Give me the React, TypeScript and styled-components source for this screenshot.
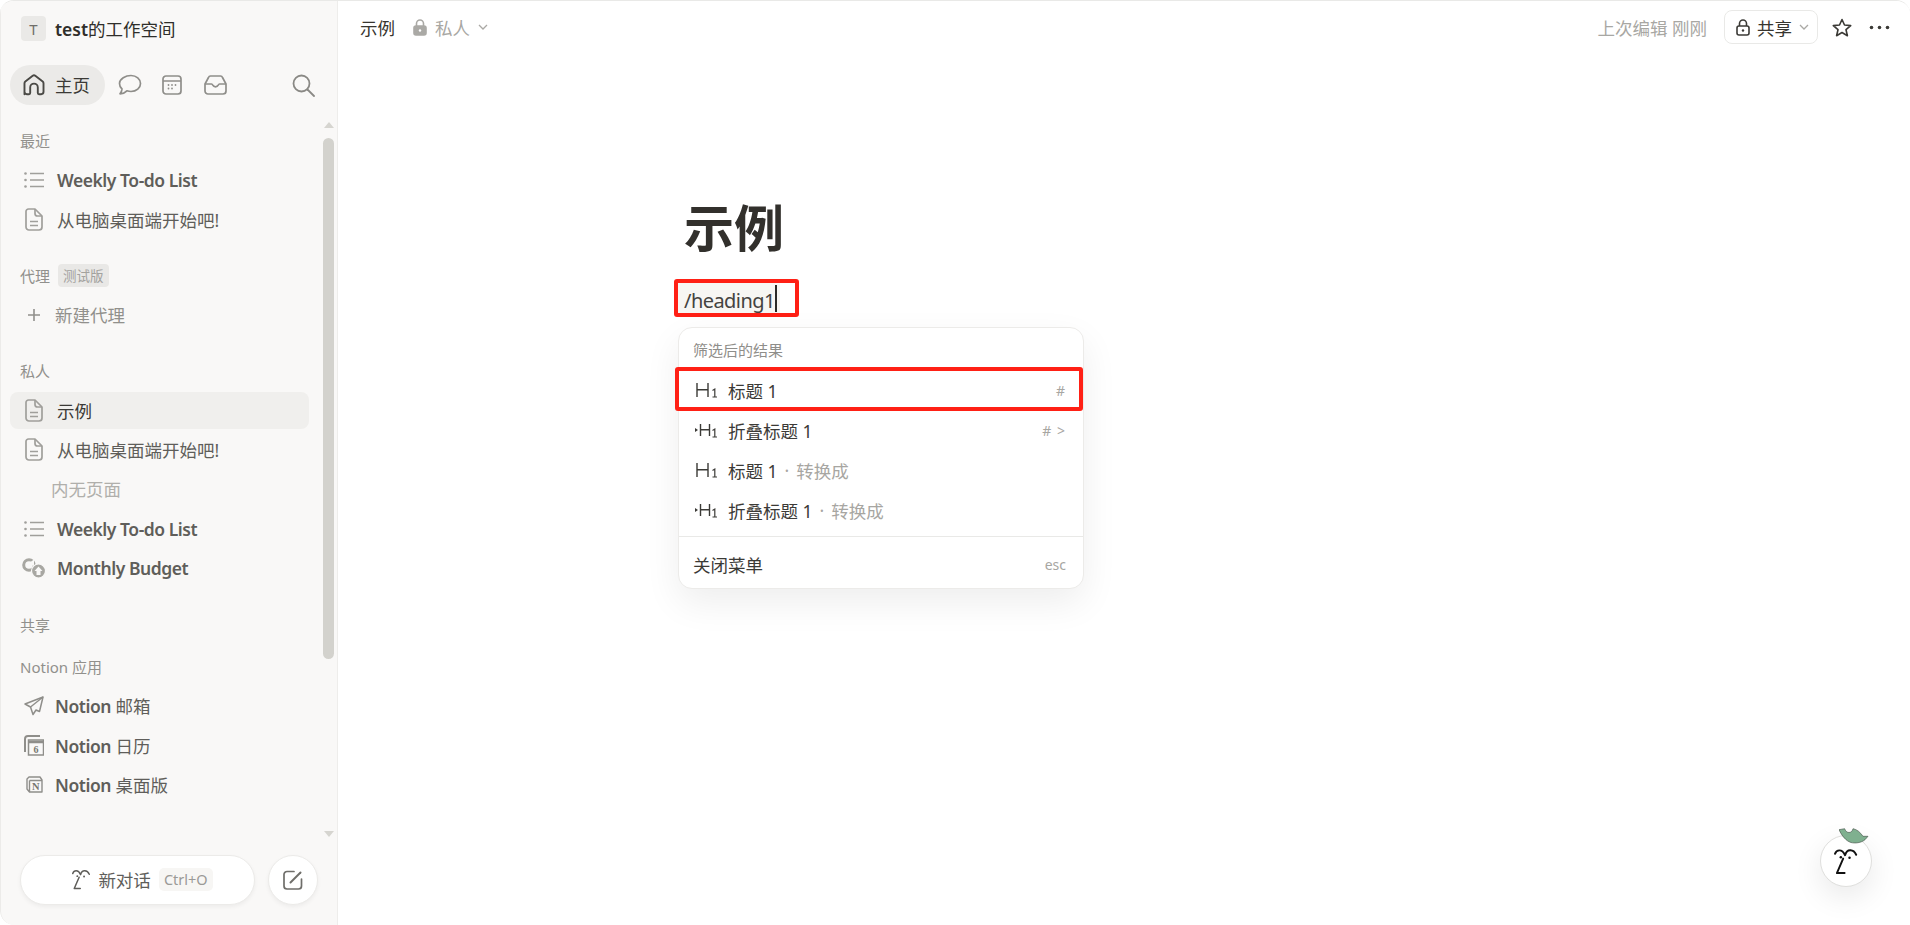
import React from "react";
import styled, { createGlobalStyle } from "styled-components";

const FONT = `"Noto Sans", "Noto Sans CJK SC", sans-serif`;
const RED = "#ff2015";

const GlobalStyle = createGlobalStyle`
  html, body {
    margin: 0;
    height: 100%;
    background: #fff;
    overflow: hidden;
  }
  * { box-sizing: border-box; }
`;

const Window = styled.div`
  display: flex;
  height: 100vh;
  border-top: 1px solid #e9e9e7;
  border-radius: 14px;
  overflow: hidden;
  font-family: ${FONT};
  font-size: 17.5px;
  color: #37352f;
`;

/* sidebar */
const Sidebar = styled.aside`
  flex: 0 0 338px;
  display: flex;
  flex-direction: column;
  background: #f9f8f7;
  border-left: 1px solid #ecebe9;
  border-right: 1px solid #eeedeb;
  border-bottom-left-radius: 14px;
`;

const Workspace = styled.div`
  height: 64px;
  padding: 0 0 9px 20px;
  display: flex;
  align-items: center;
  gap: 9px;
  color: #2f2e2a;
`;

const WorkspaceName = styled.strong`
  font-weight: 600;
`;

const WorkspaceBadge = styled.span`
  width: 25px;
  height: 25px;
  border-radius: 4px;
  background: #eae9e7;
  color: #6f6e6a;
  font-size: 15px;
  display: flex;
  align-items: center;
  justify-content: center;
`;

const NavBar = styled.nav`
  height: 40px;
  padding-left: 9px;
  display: flex;
  align-items: center;
`;

const HomePill = styled.div`
  width: 95px;
  height: 40px;
  margin-right: 13px;
  padding-left: 13px;
  border-radius: 20px;
  background: #ebeae8;
  display: flex;
  align-items: center;
  gap: 10px;
  color: #3b3a36;
`;

const HomeLabel = styled.span`
  padding-bottom: 2px;
`;

const NavIcon = styled.span<{ $gap?: number }>`
  display: flex;
  margin-left: ${(p) => p.$gap ?? 0}px;
`;

const ScrollArea = styled.div`
  flex: 1;
  min-height: 0;
  display: flex;
`;

const ScrollBody = styled.div`
  flex: 1;
  padding: 25px 14px 0 9px;
`;

const ScrollTrack = styled.div`
  flex: 0 0 11px;
  margin-right: 3px;
  padding: 17px 0 3px;
  display: flex;
  flex-direction: column;
  align-items: center;
`;

const ArrowUp = styled.span`
  width: 0;
  height: 0;
  border-left: 5px solid transparent;
  border-right: 5px solid transparent;
  border-bottom: 6px solid #d6d5d0;
  margin-bottom: 10px;
`;

const ArrowDown = styled.span`
  width: 0;
  height: 0;
  margin-top: auto;
  border-left: 5px solid transparent;
  border-right: 5px solid transparent;
  border-top: 6px solid #d6d5d0;
`;

const ScrollThumb = styled.span`
  width: 11px;
  height: 521px;
  border-radius: 6px;
  background: #d3d2cd;
`;

const Group = styled.section<{ $tight?: boolean }>`
  padding-bottom: ${(p) => (p.$tight ? 20 : 25)}px;
`;

const GroupLabel = styled.div<{ $flush?: boolean }>`
  height: 22px;
  padding: 0 0 2px 10px;
  margin-bottom: ${(p) => (p.$flush ? 0 : 9)}px;
  display: flex;
  align-items: center;
  gap: 8px;
  font-size: 15px;
  color: #91908c;
`;

const BetaTag = styled.span`
  height: 23px;
  padding: 0 5px;
  border-radius: 4px;
  background: #e9e8e6;
  font-size: 13.5px;
  color: #a3a29e;
  display: flex;
  align-items: center;
`;

const Row = styled.div<{ $active?: boolean; $muted?: boolean; $tightIcon?: boolean }>`
  height: 37px;
  margin-bottom: 2.5px;
  padding-left: 12px;
  border-radius: 8px;
  display: flex;
  align-items: center;
  gap: ${(p) => (p.$tightIcon ? 9 : 11)}px;
  background: ${(p) => (p.$active ? "#f0efed" : "transparent")};
  color: ${(p) => (p.$active ? "#3b3a36" : p.$muted ? "#91908c" : "#5f5e5a")};
`;

const RowStrong = styled.span`
  font-weight: 600;
  letter-spacing: -0.45px;
`;

const EmptyHint = styled.div`
  height: 37px;
  margin-bottom: 2.5px;
  padding: 0 0 1px 41px;
  display: flex;
  align-items: center;
  color: #b0afab;
`;

const IconSlot = styled.span`
  flex: 0 0 24px;
  display: flex;
  align-items: center;
  justify-content: center;
`;

const SidebarFooter = styled.footer`
  padding: 15px 19px 20px;
  display: flex;
  gap: 13px;
`;

const NewChatButton = styled.button`
  flex: 1;
  height: 50px;
  padding: 0 0 2px 10px;
  border: 1px solid #ecebe9;
  border-radius: 25px;
  background: #fff;
  box-shadow: 0 2px 4px rgba(0, 0, 0, 0.05);
  display: flex;
  align-items: center;
  justify-content: center;
  gap: 8px;
  font-family: inherit;
  font-size: 17.5px;
  color: #5f5e5a;
`;

const ShortcutChip = styled.span`
  height: 23px;
  padding: 0 5px;
  border-radius: 5px;
  background: #f7f6f4;
  font-size: 14.5px;
  color: #9b9a97;
  display: flex;
  align-items: center;
`;

const ComposeButton = styled.button`
  flex: 0 0 50px;
  height: 50px;
  padding: 0;
  border: 1px solid #ecebe9;
  border-radius: 50%;
  background: #fff;
  box-shadow: 0 2px 4px rgba(0, 0, 0, 0.05);
  display: flex;
  align-items: center;
  justify-content: center;
`;

/* main */
const Main = styled.main`
  flex: 1;
  min-width: 0;
  position: relative;
  display: flex;
  flex-direction: column;
  background: #fff;
`;

const TopBar = styled.header`
  height: 52px;
  padding: 0 20px 0 22px;
  display: flex;
  align-items: center;
`;

const Crumb = styled.span`
  color: #37352f;
  margin-right: 18px;
`;

const Privacy = styled.span`
  display: flex;
  align-items: center;
  gap: 8px;
  color: #a8a7a3;
`;

const TopActions = styled.div`
  margin-left: auto;
  display: flex;
  align-items: center;
`;

const EditedAt = styled.span`
  color: #a8a7a3;
  margin-right: 17px;
`;

const ShareButton = styled.div`
  width: 94px;
  height: 34px;
  margin-right: 14px;
  padding-left: 11px;
  border: 1px solid #e9e9e7;
  border-radius: 8px;
  display: flex;
  align-items: center;
  gap: 7px;
  color: #37352f;
`;

const DotsButton = styled.span`
  display: flex;
  margin-left: 17px;
`;

const Document = styled.div`
  padding: 145px 0 0 346px;
`;

const Title = styled.h1`
  margin: 0 0 25px;
  height: 60px;
  font-size: 50px;
  line-height: 60px;
  font-weight: 700;
  color: #32302c;
`;

const CommandLine = styled.div`
  position: relative;
  height: 30px;
  width: 102px;
  padding: 4px 0 0 6px;
  margin-left: -6px;
  background: #f7f6f3;
  display: flex;
  align-items: center;
  font-size: 20px;
  letter-spacing: -0.55px;
  color: #44433f;
`;

const Caret = styled.span`
  width: 2px;
  height: 27px;
  margin-top: -4px;
  background: #2b2a27;
`;

const RedFrame = styled.span<{ $inset: string }>`
  position: absolute;
  inset: ${(p) => p.$inset};
  border: 4px solid ${RED};
  border-radius: 3px;
  pointer-events: none;
`;

const SlashMenu = styled.div`
  position: absolute;
  top: 44px;
  left: 0;
  width: 406px;
  height: 262px;
  padding-top: 6px;
  background: #fff;
  border: 1px solid #ecebe9;
  border-radius: 14px;
  box-shadow: 0 14px 36px rgba(0, 0, 0, 0.07);
  letter-spacing: normal;
`;

const MenuLabel = styled.div`
  height: 36px;
  padding: 0 0 6px 14px;
  display: flex;
  align-items: center;
  font-size: 15px;
  color: #8f8e8a;
`;

const MenuRow = styled.div`
  position: relative;
  height: 40px;
  padding: 0 17px 0 16px;
  display: flex;
  align-items: center;
  font-size: 17.5px;
  color: #3b3a36;
`;

const MenuRowIcon = styled.span`
  flex: 0 0 23px;
  margin-right: 10px;
  display: flex;
`;

const Dot = styled.span`
  margin: 0 7px;
  color: #a7a6a2;
`;

const Hint = styled.span`
  color: #a7a6a2;
`;

const MenuShortcut = styled.span`
  margin-left: auto;
  font-size: 14px;
  letter-spacing: 1px;
  color: #a7a6a2;
`;

const MenuDivider = styled.div`
  height: 1px;
  margin-top: 6px;
  background: #e9e9e7;
`;

const MenuFooter = styled.div`
  height: 51px;
  padding: 3px 17px 0 14px;
  display: flex;
  align-items: center;
  justify-content: space-between;
  font-size: 17.5px;
  color: #3b3a36;
`;

const EscHint = styled.span`
  font-size: 14px;
  color: #a7a6a2;
`;

const AssistantBubble = styled.div`
  position: absolute;
  right: 38px;
  bottom: 38px;
  width: 52px;
  height: 52px;
  border: 1px solid #dfdfdd;
  border-radius: 50%;
  background: #fff;
  box-shadow: 0 10px 30px rgba(0, 0, 0, 0.09);
  display: flex;
  align-items: center;
  justify-content: center;
`;

const LeafHat = styled.svg`
  position: absolute;
  top: -8px;
  left: 18px;
`;

/* icons */
const GREY = "#a09f9b";

const HomeIcon = () => (
  <svg width="22" height="22" viewBox="2 1.500 18 18.500" fill="none" stroke="#4a4945" strokeWidth="1.600">
    <path d="M3 18.500 V9.300 a1.800 1.800 0 0 1 .7-1.400 L9.900 3 a1.800 1.800 0 0 1 2.200 0 L18.300 7.900 a1.800 1.800 0 0 1 .7 1.400 V16.500 a2 2 0 0 1-2 2 H15.200 a1 1 0 0 1-1-1 V12.800 a3.200 3.200 0 0 0-6.400 0 V17.500 a1 1 0 0 1-1 1 H5 a2 2 0 0 1-2-2 Z" strokeLinejoin="round" />
  </svg>
);

const ChatIcon = () => (
  <svg width="24" height="22" viewBox="0 0 24 22" fill="none" stroke="#8f8e8a" strokeWidth="1.700" strokeLinejoin="round">
    <path d="M13 1.500 c5.400 0 9.500 3.500 9.500 8 s-4.100 8-9.500 8 c-1.500 0-2.900-.3-4.100-.7 -1.500 1.600-3.700 2.800-6.900 3 1.100-1.300 1.900-3 2-4.800 C2.300 13.500 1.500 11.600 1.500 9.500 1.500 5 7.600 1.500 13 1.500 Z" />
  </svg>
);

const CalendarIcon = () => (
  <svg width="20" height="20" viewBox="0 0 20 20" fill="none" stroke="#8f8e8a" strokeWidth="1.700">
    <rect x="1" y="1" width="18" height="18" rx="3" />
    <path d="M1 6 H19" />
    <g fill="#8f8e8a" stroke="none">
      <circle cx="6.500" cy="10" r=".9" />
      <circle cx="10" cy="10" r=".9" />
      <circle cx="13.500" cy="10" r=".9" />
      <circle cx="6.500" cy="13.500" r=".9" />
      <circle cx="10" cy="13.500" r=".9" />
    </g>
  </svg>
);

const InboxIcon = () => (
  <svg width="23" height="20" viewBox="0 0 23 20" fill="none" stroke="#8f8e8a" strokeWidth="1.700" strokeLinejoin="round">
    <path d="M1 9 L4.500 2.500 a2.500 2.500 0 0 1 2-1.500 H16.500 a2.500 2.500 0 0 1 2 1.500 L22 9 V16 a3 3 0 0 1-3 3 H4 a3 3 0 0 1-3-3 Z" />
    <path d="M1 9 H7.500 c.8 0 1 .5 1.300 1.200 .5 1 1.400 1.600 2.700 1.600 s2.200-.6 2.700-1.600 C14.500 9.500 14.700 9 15.500 9 H22" />
  </svg>
);

const SearchIcon = () => (
  <svg width="23" height="23" viewBox="0 0 23 23" fill="none" stroke="#8a8985" strokeWidth="1.800" strokeLinecap="round">
    <circle cx="9.500" cy="9.500" r="8" />
    <path d="M15.500 15.500 L22 22" />
  </svg>
);

const ListIcon = () => (
  <svg width="20" height="16" viewBox="0 0 20 16" fill="none" stroke={GREY} strokeWidth="1.700">
    <path d="M6 1.500 H20 M6 8 H20 M6 14.500 H20" />
    <g fill={GREY} stroke="none">
      <circle cx="1.500" cy="1.500" r="1.300" />
      <circle cx="1.500" cy="8" r="1.300" />
      <circle cx="1.500" cy="14.500" r="1.300" />
    </g>
  </svg>
);

const PageIcon = () => (
  <svg width="18" height="23" viewBox="0 0 18 23" fill="none" stroke={GREY} strokeWidth="1.700" strokeLinejoin="round">
    <path d="M3.500 1 H10 L17 8 V19 a3 3 0 0 1-3 3 H4 a3 3 0 0 1-3-3 V3.500 A2.500 2.500 0 0 1 3.500 1 Z" />
    <path d="M10 1 V5.500 a2.500 2.500 0 0 0 2.500 2.500 H17" />
    <path d="M5 13.500 H13 M5 17.500 H13" />
  </svg>
);

const PlusIcon = () => (
  <svg width="14" height="14" viewBox="0 0 14 14" stroke="#91908c" strokeWidth="1.600">
    <path d="M7 1 V13 M1 7 H13" />
  </svg>
);

const CoinsIcon = () => (
  <svg width="24" height="20" viewBox="0 0 24 20">
    <circle cx="7" cy="7" r="5.300" fill="none" stroke="#a8a7a2" strokeWidth="3" />
    <path d="M7 5 L12 1.500 V8 Z" fill="#f9f8f7" />
    <circle cx="16.500" cy="13" r="7" fill="#a8a7a2" stroke="#f9f8f7" strokeWidth="1.200" />
    <path d="M16.500 8.500 L20.500 13 H18.500 V17 H14.500 V13 H12.500 Z" fill="#f9f8f7" />
  </svg>
);

const SendIcon = () => (
  <svg width="20" height="20" viewBox="0 0 20 20" fill="none" stroke="#8f8e8a" strokeWidth="1.500" strokeLinejoin="round">
    <path d="M19 1 L1 8 L6.500 11 L9 18.500 L12 14 L15.500 15.500 Z" />
    <path d="M19 1 L6.500 11" />
  </svg>
);

const CalendarAppIcon = () => (
  <svg width="20" height="21" viewBox="0 0 20 21" fill="none" stroke="#8f8e8a">
    <path d="M1 17 V4 a3 3 0 0 1 3-3 H16" strokeWidth="2" />
    <rect x="4.500" y="5" width="15" height="15" fill="#f9f8f7" strokeWidth="1.500" />
    <path d="M4.500 7 H19.500" strokeWidth="2.500" />
    <text x="12" y="18" textAnchor="middle" fontSize="10" fontWeight="700" fontFamily="Liberation Serif, serif" fill="#77766f" stroke="none">6</text>
  </svg>
);

const NotionAppIcon = () => (
  <svg width="17" height="17" viewBox="0 0 17 17" fill="none" stroke="#8f8e8a" strokeWidth="1.400" strokeLinejoin="round">
    <path d="M1 3 L3 1 H14 L16 4 V16 H3.500 L1 13 Z" />
    <path d="M3.500 4.500 H16 M3.500 4.500 V16" />
    <text x="9.700" y="14" textAnchor="middle" fontSize="10.500" fontWeight="700" fontFamily="Liberation Serif, serif" fill="#77766f" stroke="none">N</text>
  </svg>
);

const FaceIcon = ({ height, color }: { height: number; color: string }) => (
  <svg width={(height * 24) / 28} height={height} viewBox="-0.500 -0.500 24 28" fill="none" stroke={color} strokeWidth="2" strokeLinecap="round" strokeLinejoin="round">
    <path d="M.5 5.500 C2 1.500 7.500 -.5 11 7 C13 -.5 20 1 22.500 6.500" />
    <path d="M9 10.500 L2.500 25.500 H10.500" />
    <circle cx="6.600" cy="9" r="1.300" fill={color} stroke="none" />
    <circle cx="15.600" cy="9.600" r="1.300" fill={color} stroke="none" />
  </svg>
);

const ComposeIcon = () => (
  <svg width="20" height="20" viewBox="0 0 20 20" fill="none" stroke="#6f6e6a" strokeWidth="1.700" strokeLinecap="round" strokeLinejoin="round">
    <path d="M11 1.500 H4 a3 3 0 0 0-3 3 V16 a3 3 0 0 0 3 3 H15.500 a3 3 0 0 0 3-3 V9" />
    <path d="M7.500 12.500 L17.500 2.500" strokeWidth="2" />
  </svg>
);

const LockIcon = ({ solid }: { solid?: boolean }) => (
  <svg width="14" height="17" viewBox="0 0 14 17" fill="none" stroke={solid ? "#aaa9a5" : "#3b3a36"} strokeWidth="1.600">
    <path d="M3.500 7 V4.500 a3.500 3.500 0 0 1 7 0 V7" />
    <rect x="1" y="7" width="12" height="9" rx="2" fill={solid ? "#aaa9a5" : "none"} />
    <circle cx="7" cy="11.500" r="1.200" fill={solid ? "#fff" : "#3b3a36"} stroke="none" />
  </svg>
);

const ChevronIcon = () => (
  <svg width="10" height="6" viewBox="0 0 10 6" fill="none" stroke="#aaa9a5" strokeWidth="1.300">
    <path d="M1 1 L5 5 L9 1" />
  </svg>
);

const StarIcon = () => (
  <svg width="20" height="19" viewBox="0 0 20 19" fill="none" stroke="#3b3a36" strokeWidth="1.600" strokeLinejoin="round">
    <path d="M10 1.500 L12.500 7 L18.700 7.600 L14 11.700 L15.400 17.700 L10 14.500 L4.600 17.700 L6 11.700 L1.300 7.600 L7.500 7 Z" />
  </svg>
);

const DotsIcon = () => (
  <svg width="21" height="5" viewBox="0 0 21 5" fill="#3b3a36">
    <circle cx="2.500" cy="2.500" r="1.800" />
    <circle cx="10.500" cy="2.500" r="1.800" />
    <circle cx="18.500" cy="2.500" r="1.800" />
  </svg>
);

const HeadingIcon = ({ toggle }: { toggle?: boolean }) => (
  <svg width="23" height="16" viewBox="0 0 23 16" fill="none" stroke="#3b3a36" strokeWidth="1.400">
    {toggle ? (
      <>
        <path d="M0 6 L3 8 L0 10 Z" fill="#3b3a36" stroke="none" />
        <path d="M5.500 2 V14 M14.500 2 V14 M5.500 7.800 H14.500" />
      </>
    ) : (
      <path d="M2 1 V15 M13 1 V15 M2 7.800 H13" />
    )}
    <path d="M17.500 8.500 L19.800 7 V15 M17.500 15 H22" strokeWidth="1.200" />
  </svg>
);

const App = () => {
  return (
    <>
      <GlobalStyle />
      <Window>
        <Sidebar>
          <Workspace>
            <WorkspaceBadge>T</WorkspaceBadge>
            <span><WorkspaceName>test</WorkspaceName>的工作空间</span>
          </Workspace>
          <NavBar>
            <HomePill>
              <HomeIcon />
              <HomeLabel>主页</HomeLabel>
            </HomePill>
            <NavIcon><ChatIcon /></NavIcon>
            <NavIcon $gap={20}><CalendarIcon /></NavIcon>
            <NavIcon $gap={22}><InboxIcon /></NavIcon>
            <NavIcon $gap={65}><SearchIcon /></NavIcon>
          </NavBar>
          <ScrollArea>
            <ScrollBody>
              <Group>
                <GroupLabel>最近</GroupLabel>
                <Row>
                  <IconSlot><ListIcon /></IconSlot>
                  <RowStrong>Weekly To-do List</RowStrong>
                </Row>
                <Row>
                  <IconSlot><PageIcon /></IconSlot>
                  从电脑桌面端开始吧!
                </Row>
              </Group>
              <Group>
                <GroupLabel>
                  代理
                  <BetaTag>测试版</BetaTag>
                </GroupLabel>
                <Row $muted $tightIcon>
                  <IconSlot><PlusIcon /></IconSlot>
                  新建代理
                </Row>
              </Group>
              <Group>
                <GroupLabel>私人</GroupLabel>
                <Row $active>
                  <IconSlot><PageIcon /></IconSlot>
                  示例
                </Row>
                <Row>
                  <IconSlot><PageIcon /></IconSlot>
                  从电脑桌面端开始吧!
                </Row>
                <EmptyHint>内无页面</EmptyHint>
                <Row>
                  <IconSlot><ListIcon /></IconSlot>
                  <RowStrong>Weekly To-do List</RowStrong>
                </Row>
                <Row>
                  <IconSlot><CoinsIcon /></IconSlot>
                  <RowStrong>Monthly Budget</RowStrong>
                </Row>
              </Group>
              <Group $tight>
                <GroupLabel $flush>共享</GroupLabel>
              </Group>
              <Group>
                <GroupLabel>Notion 应用</GroupLabel>
                <Row $tightIcon>
                  <IconSlot><SendIcon /></IconSlot>
                  <span><RowStrong>Notion</RowStrong> 邮箱</span>
                </Row>
                <Row $tightIcon>
                  <IconSlot><CalendarAppIcon /></IconSlot>
                  <span><RowStrong>Notion</RowStrong> 日历</span>
                </Row>
                <Row $tightIcon>
                  <IconSlot><NotionAppIcon /></IconSlot>
                  <span><RowStrong>Notion</RowStrong> 桌面版</span>
                </Row>
              </Group>
            </ScrollBody>
            <ScrollTrack>
              <ArrowUp />
              <ScrollThumb />
              <ArrowDown />
            </ScrollTrack>
          </ScrollArea>
          <SidebarFooter>
            <NewChatButton>
              <FaceIcon height={21} color="#5f5e5a" />
              新对话
              <ShortcutChip>Ctrl+O</ShortcutChip>
            </NewChatButton>
            <ComposeButton><ComposeIcon /></ComposeButton>
          </SidebarFooter>
        </Sidebar>
        <Main>
          <TopBar>
            <Crumb>示例</Crumb>
            <Privacy>
              <LockIcon solid />
              私人
              <ChevronIcon />
            </Privacy>
            <TopActions>
              <EditedAt>上次编辑 刚刚</EditedAt>
              <ShareButton>
                <LockIcon />
                共享
                <ChevronIcon />
              </ShareButton>
              <StarIcon />
              <DotsButton><DotsIcon /></DotsButton>
            </TopActions>
          </TopBar>
          <Document>
            <Title>示例</Title>
            <CommandLine>
              /heading1
              <Caret />
              <RedFrame $inset="-4px -19px -4px -4px" />
              <SlashMenu>
                <MenuLabel>筛选后的结果</MenuLabel>
                <MenuRow>
                  <MenuRowIcon><HeadingIcon /></MenuRowIcon>
                  标题 1
                  <MenuShortcut>#</MenuShortcut>
                  <RedFrame $inset="-3px 0 -1px -4px" />
                </MenuRow>
                <MenuRow>
                  <MenuRowIcon><HeadingIcon toggle /></MenuRowIcon>
                  折叠标题 1
                  <MenuShortcut># &gt;</MenuShortcut>
                </MenuRow>
                <MenuRow>
                  <MenuRowIcon><HeadingIcon /></MenuRowIcon>
                  标题 1<Dot>·</Dot><Hint>转换成</Hint>
                </MenuRow>
                <MenuRow>
                  <MenuRowIcon><HeadingIcon toggle /></MenuRowIcon>
                  折叠标题 1<Dot>·</Dot><Hint>转换成</Hint>
                </MenuRow>
                <MenuDivider />
                <MenuFooter>
                  关闭菜单
                  <EscHint>esc</EscHint>
                </MenuFooter>
              </SlashMenu>
            </CommandLine>
          </Document>
          <AssistantBubble>
            <LeafHat width="30" height="16" viewBox="0 0 30 16">
              <path d="M0 1.700 L5.600 .7 C6.500 3 8 4.500 10 4.500 C12 4.500 13.500 3 14 .7 C18 1.500 21 4 24 8.300 L29 8.300 L26 11.700 C22 15 16 15.500 12 14.500 C7 13 3 8 0 1.700 Z" fill="#7fb08f" stroke="#3e4a42" strokeWidth=".6" />
            </LeafHat>
            <FaceIcon height={27} color="#111" />
          </AssistantBubble>
        </Main>
      </Window>
    </>
  );
};

export default App;
